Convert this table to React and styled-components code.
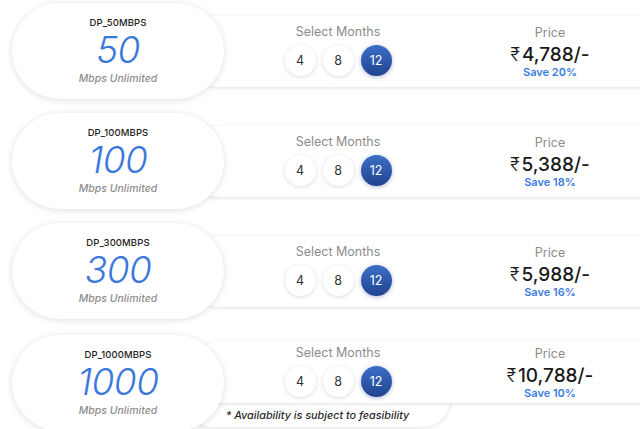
import React from 'react';
import styled, { createGlobalStyle } from 'styled-components';

const GlobalStyle = createGlobalStyle`
  html, body {
    margin: 0;
    padding: 0;
    background: #ffffff;
    overflow: hidden;
  }
  body {
    font-family: Inter, "Noto Sans", "DejaVu Sans", sans-serif;
    color: #222;
  }
`;

const Page = styled.div`
  width: 640px;
  height: 429px;
  overflow: hidden;
  padding: 3px 0 0 12px;
  box-sizing: border-box;
  display: flex;
  flex-direction: column;
  gap: 14px;
`;

const Row = styled.div`
  display: flex;
  align-items: ${p => (p.last ? 'flex-start' : 'center')};
  height: 96px;
  margin-top: ${p => (p.last ? '2px' : '0')};
`;

const Pill = styled.div`
  position: relative;
  z-index: 3;
  flex-shrink: 0;
  width: 212px;
  height: 96px;
  border-radius: 48px;
  background: #fff;
  box-shadow: 0 1px 7px rgba(0, 0, 0, 0.13);
  display: flex;
  flex-direction: column;
  align-items: center;
  justify-content: center;
`;

const PlanName = styled.div`
  font-size: 9.5px;
  line-height: 13px;
  font-weight: 500;
  color: #222;
  letter-spacing: 0.1px;
`;

const Speed = styled.div`
  font-size: 37px;
  line-height: 42px;
  font-style: italic;
  font-weight: 300;
  color: #3b78dc;
  letter-spacing: -0.5px;
`;

const Unit = styled.div`
  font-size: 10.5px;
  line-height: 14px;
  margin-top: 1px;
  font-style: italic;
  font-weight: 500;
  color: #8e8e8e;
`;

const BarColumn = styled.div`
  flex: 1;
  margin-left: -19px;
  margin-top: ${p => (p.last ? '6px' : '0')};
  display: flex;
  flex-direction: column;
`;

const Bar = styled.div`
  position: relative;
  z-index: 2;
  width: 460px;
  height: ${p => (p.compact ? '62px' : '71px')};
  box-sizing: border-box;
  padding: ${p => (p.compact ? '4px' : '8px')} 0 0 73px;
  background: #fff;
  border-radius: 10px;
  box-shadow: 0 1px 4px rgba(0, 0, 0, 0.12);
  display: flex;
  align-items: flex-start;
  gap: 92px;
`;

const Block = styled.div`
  width: 120px;
  display: flex;
  flex-direction: column;
  align-items: center;
`;

const Label = styled.div`
  font-size: 12.5px;
  line-height: 16px;
  color: #8c8c8c;
  margin-top: ${p => (p.offset ? '1px' : '0')};
`;

const Months = styled.div`
  display: flex;
  gap: 7px;
  margin-top: 5px;
`;

const MonthButton = styled.div`
  width: 31px;
  height: 31px;
  border-radius: 50%;
  display: flex;
  align-items: center;
  justify-content: center;
  font-size: 12.5px;
  color: ${p => (p.active ? '#fff' : '#333')};
  background: ${p =>
    p.active ? 'linear-gradient(180deg, #3d6fc8 0%, #1f438f 100%)' : '#fff'};
  box-shadow: ${p =>
    p.active ? '0 1px 4px rgba(20, 50, 120, 0.35)' : '0 1px 4px rgba(0, 0, 0, 0.14)'};
`;

const Amount = styled.div`
  font-size: 19px;
  line-height: 22px;
  font-weight: 500;
  color: #1a1a1a;
  margin-top: 3px;
  white-space: nowrap;
`;

const Rupee = styled.span`
  font-weight: 300;
  font-size: 18px;
  margin-right: 2px;
`;

const Save = styled.div`
  font-size: 11px;
  line-height: 13px;
  font-weight: 600;
  color: #3b7be0;
`;

const NoteCard = styled.div`
  position: relative;
  z-index: 1;
  width: 265px;
  height: 54px;
  margin: -30px 0 0 -20px;
  box-sizing: border-box;
  padding-bottom: 4px;
  border-radius: 30px;
  background: #fff;
  box-shadow: 0 1px 5px rgba(0, 0, 0, 0.12);
  display: flex;
  align-items: flex-end;
  justify-content: center;
`;

const Note = styled.div`
  font-size: 10.8px;
  line-height: 14px;
  font-style: italic;
  font-weight: 500;
  color: #2a2a2a;
  white-space: nowrap;
`;

const plans = [
  { name: 'DP_50MBPS', speed: '50', price: '4,788', save: '20%' },
  { name: 'DP_100MBPS', speed: '100', price: '5,388', save: '18%' },
  { name: 'DP_300MBPS', speed: '300', price: '5,988', save: '16%' },
  { name: 'DP_1000MBPS', speed: '1000', price: '10,788', save: '10%' },
];

const PlanRow = ({ plan, last }) => (
  <Row last={last}>
    <Pill>
      <PlanName>{plan.name}</PlanName>
      <Speed>{plan.speed}</Speed>
      <Unit>Mbps Unlimited</Unit>
    </Pill>
    <BarColumn last={last}>
      <Bar compact={last}>
        <Block>
          <Label>Select Months</Label>
          <Months>
            <MonthButton>4</MonthButton>
            <MonthButton>8</MonthButton>
            <MonthButton active>12</MonthButton>
          </Months>
        </Block>
        <Block>
          <Label offset>Price</Label>
          <Amount>
            <Rupee>₹</Rupee>
            {plan.price}/-
          </Amount>
          <Save>Save {plan.save}</Save>
        </Block>
      </Bar>
      {last && (
        <NoteCard>
          <Note>* Availability is subject to feasibility</Note>
        </NoteCard>
      )}
    </BarColumn>
  </Row>
);

const App = () => (
  <>
    <GlobalStyle />
    <Page>
      {plans.map((plan, i) => (
        <PlanRow key={plan.name} plan={plan} last={i === plans.length - 1} />
      ))}
    </Page>
  </>
);

export default App;
